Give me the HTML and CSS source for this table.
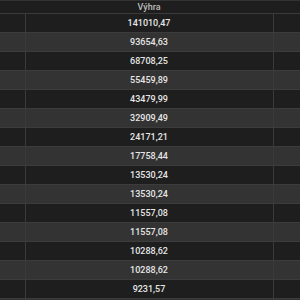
FILE: index.html
```html
<!DOCTYPE html>
<html>
<head>
<meta charset="utf-8">
<link rel="stylesheet" href="styles.css">
</head>
<body>
<table class="grid">
  <thead>
    <tr><th class="side"></th><th class="main">Výhra</th><th class="side"></th></tr>
  </thead>
  <tbody>
    <tr class="odd"><td></td><td>141010,47</td><td></td></tr>
    <tr class="even"><td></td><td>93654,63</td><td></td></tr>
    <tr class="odd"><td></td><td>68708,25</td><td></td></tr>
    <tr class="even"><td></td><td>55459,89</td><td></td></tr>
    <tr class="odd"><td></td><td>43479,99</td><td></td></tr>
    <tr class="even"><td></td><td>32909,49</td><td></td></tr>
    <tr class="odd"><td></td><td>24171,21</td><td></td></tr>
    <tr class="even"><td></td><td>17758,44</td><td></td></tr>
    <tr class="odd"><td></td><td>13530,24</td><td></td></tr>
    <tr class="even"><td></td><td>13530,24</td><td></td></tr>
    <tr class="odd"><td></td><td>11557,08</td><td></td></tr>
    <tr class="even"><td></td><td>11557,08</td><td></td></tr>
    <tr class="odd"><td></td><td>10288,62</td><td></td></tr>
    <tr class="even"><td></td><td>10288,62</td><td></td></tr>
    <tr class="odd"><td></td><td>9231,57</td><td></td></tr>
    <tr class="even"><td></td><td></td><td></td></tr>
  </tbody>
</table>
</body>
</html>
```
FILE: styles.css
```css
html, body {
  margin: 0;
  padding: 0;
  background: #1e1e1e;
  overflow: hidden;
}
.grid {
  width: 300px;
  border-collapse: collapse;
  table-layout: fixed;
  font-family: Roboto, "Noto Sans", sans-serif;
  font-size: 9px;
  font-weight: 500;
  color: #e6e6e6;
}
.grid th {
  height: 12px;
  padding: 0;
  background: #1e1e1e;
  border-top: 1px solid #333;
  border-bottom: 1px solid #3a3a3a;
  color: #bdbdbd;
  font-weight: 500;
  line-height: 12px;
}
.grid th.side {
  width: 25px;
}
.grid th.side:last-child {
  width: 27px;
}
.grid td {
  height: 18px;
  padding: 0;
  text-align: center;
  line-height: 18px;
  border-bottom: 1px solid #3c3c3c;
}
.grid td + td {
  border-left: 1px solid #3a3a3a;
}
.grid tr.odd td {
  background: #1e1e1e;
}
.grid tr.even td {
  background: #333333;
}
```
